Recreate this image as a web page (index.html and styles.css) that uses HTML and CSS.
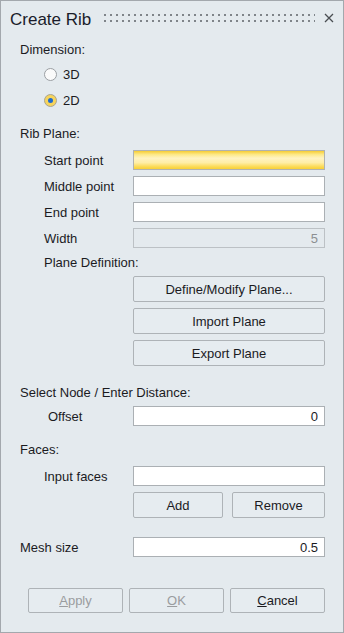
FILE: index.html
```html
<!DOCTYPE html>
<html lang="en">
<head>
    <meta charset="UTF-8">
    <meta name="viewport" content="width=device-width, initial-scale=1.0">
    <title>Create Rib</title>
    <link rel="stylesheet" href="styles.css">
</head>
<body>

    <div class="dialog">
        <div class="title-bar">
            <span class="title">Create Rib</span>
            <span class="grip"></span>
            <svg class="close" width="10" height="10" viewBox="0 0 10 10">
                <path d="M1 1 L9 9 M9 1 L1 9" stroke="#4a4e52" stroke-width="1.3" fill="none"/>
            </svg>
        </div>

        <div class="content">
            <div class="section dim-label">Dimension:</div>
            <label class="radio-row">
                <span class="radio"></span>3D
            </label>
            <label class="radio-row">
                <span class="radio checked"></span>2D
            </label>

            <div class="section rib-label">Rib Plane:</div>
            <div class="field first">
                <span class="field-label">Start point</span>
                <input type="text" class="input active">
            </div>
            <div class="field">
                <span class="field-label">Middle point</span>
                <input type="text" class="input">
            </div>
            <div class="field">
                <span class="field-label">End point</span>
                <input type="text" class="input">
            </div>
            <div class="field">
                <span class="field-label">Width</span>
                <input type="text" class="input disabled" value="5" disabled>
            </div>

            <div class="sub-label">Plane Definition:</div>
            <button class="btn wide first-btn">Define/Modify Plane...</button>
            <button class="btn wide">Import Plane</button>
            <button class="btn wide">Export Plane</button>

            <div class="section node-label">Select Node / Enter Distance:</div>
            <div class="field offset-row">
                <span class="field-label offset">Offset</span>
                <input type="text" class="input" value="0">
            </div>

            <div class="section faces-label">Faces:</div>
            <div class="field">
                <span class="field-label">Input faces</span>
                <input type="text" class="input">
            </div>
            <div class="btn-pair">
                <button class="btn add">Add</button>
                <button class="btn remove">Remove</button>
            </div>

            <div class="field mesh-row">
                <span class="field-label flush">Mesh size</span>
                <input type="text" class="input" value="0.5">
            </div>

            <div class="footer">
                <button class="btn foot" disabled><u>A</u>pply</button>
                <button class="btn foot" disabled><u>O</u>K</button>
                <button class="btn foot"><u>C</u>ancel</button>
            </div>
        </div>
    </div>

</body>
</html>
```

FILE: styles.css
```css
body {
    margin: 0;
    padding: 0;
    font-family: "Liberation Sans", Arial, sans-serif;
    background-color: #e4eaee;
}

.dialog {
    width: 344px;
    height: 633px;
    box-sizing: border-box;
    border: 1px solid #a3a8ad;
    background-color: #e4eaee;
    color: #1b1b1f;
    font-size: 13px;
}

.title-bar {
    height: 37px;
    display: flex;
    align-items: center;
    padding-left: 9px;
}

.title {
    font-size: 17px;
    color: #1a1c2a;
    width: 81px;
    white-space: nowrap;
}

.grip {
    width: 213px;
    height: 12px;
    margin-left: 11px;
    margin-bottom: 3px;
    background-image: radial-gradient(circle, #7f8489 1.1px, transparent 1.4px);
    background-size: 6px 6px;
}

.close {
    margin-left: 9px;
    margin-bottom: 3px;
}

.content {
    padding: 0 18px 0 19px;
}

.section,
.sub-label {
    height: 20px;
    line-height: 20px;
    white-space: nowrap;
}

.dim-label {
    height: 23px;
    line-height: 24px;
}

.rib-label {
    margin-top: 11px;
}

.sub-label {
    margin-top: 5px;
    padding-left: 24px;
}

.node-label {
    margin-top: 17px;
}

.faces-label {
    margin-top: 14px;
}

.radio-row {
    height: 26px;
    display: flex;
    align-items: center;
    padding-left: 24px;
}

.radio {
    width: 11px;
    height: 11px;
    border: 1px solid #9b9fa3;
    border-radius: 50%;
    background-color: #fafafa;
    margin-right: 6px;
    display: flex;
    align-items: center;
    justify-content: center;
}

.radio.checked {
    background-color: #f6d45c;
    border-color: #a8a492;
}

.radio.checked::after {
    content: "";
    width: 5px;
    height: 5px;
    border-radius: 50%;
    background-color: #1d6ad0;
}

.field {
    height: 20px;
    display: flex;
    align-items: center;
    margin-top: 6px;
}

.field.first {
    margin-top: 6px;
}

.offset-row {
    margin-top: 3px;
}

.mesh-row {
    margin-top: 19px;
}

.field-label {
    width: 89px;
    padding-left: 24px;
    white-space: nowrap;
}

.field-label.offset {
    width: 85px;
    padding-left: 28px;
}

.field-label.flush {
    width: 113px;
    padding-left: 0;
}

.input {
    width: 192px;
    height: 20px;
    box-sizing: border-box;
    border: 1px solid #abb0b4;
    background-color: #fff;
    font-family: "Liberation Sans", Arial, sans-serif;
    font-size: 13px;
    color: #1b1b1f;
    text-align: right;
    padding: 0 6px 0 4px;
    margin: 0;
    outline: none;
}

.input.active {
    border-color: #b0b2b0;
    background: linear-gradient(#f6cc34 0%, #fde98a 20%, #fff3c2 40%, #ffeea6 65%, #fbd84c 90%, #f8d039 100%);
}

.input.disabled {
    background-color: #e4eaee;
    border-color: #bcc1c5;
    color: #8c8f92;
}

.btn {
    height: 26px;
    box-sizing: border-box;
    border: 1px solid #aeb3b7;
    border-radius: 2px;
    background-color: #e6ecf0;
    font-family: "Liberation Sans", Arial, sans-serif;
    font-size: 13px;
    color: #1b1b1f;
    padding: 0;
    cursor: pointer;
}

.btn.wide {
    display: block;
    width: 192px;
    margin: 6px 0 0 113px;
}

.btn.wide.first-btn {
    margin-top: 3px;
}

.btn-pair {
    display: flex;
    justify-content: space-between;
    margin: 6px 0 0 113px;
}

.btn.add {
    width: 90px;
}

.btn.remove {
    width: 93px;
}

.footer {
    display: flex;
    justify-content: flex-end;
    gap: 6px;
    margin-top: 31px;
}

.btn.foot {
    width: 95px;
    height: 25px;
}

.btn:disabled {
    color: #9a9c9f;
    cursor: default;
}
```
